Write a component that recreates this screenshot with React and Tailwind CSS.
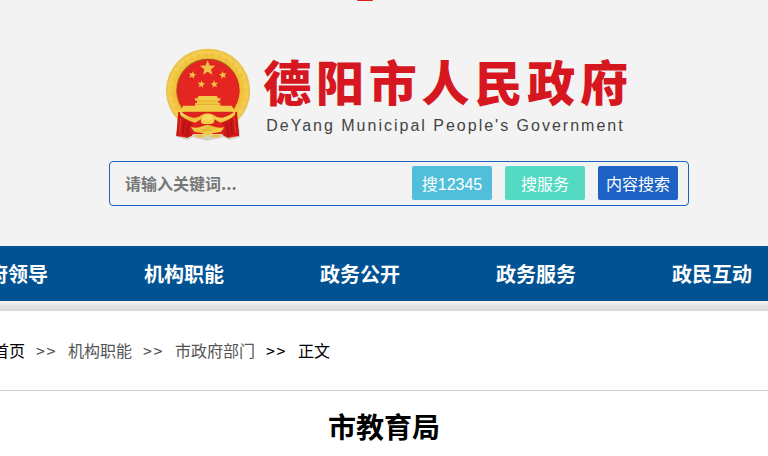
const navItems = ['政府领导', '机构职能', '政务公开', '政务服务', '政民互动'];

const STAR = '0,-1 0.26,-0.358 0.951,-0.309 0.42,0.136 0.588,0.809 0,0.44 -0.588,0.809 -0.42,0.136 -0.951,-0.309 -0.26,-0.358';

function Emblem() {
  return (
    <svg viewBox="28 22 264 279" className="h-[93px] w-[88px] shrink-0" role="img" aria-label="国徽">
      <defs>
        <linearGradient id="gold" x1="0" y1="0" x2="1" y2="1">
          <stop offset="0" stopColor="#fbe07a" />
          <stop offset="0.4" stopColor="#edbd36" />
          <stop offset="0.7" stopColor="#f6d04a" />
          <stop offset="1" stopColor="#dba52a" />
        </linearGradient>
        <radialGradient id="rim" cx="0.5" cy="0.5" r="0.5">
          <stop offset="0.72" stopColor="#d9a52a" />
          <stop offset="0.78" stopColor="#f0c03a" />
          <stop offset="0.92" stopColor="#f5d052" />
          <stop offset="1" stopColor="#e9bd3e" />
        </radialGradient>
      </defs>
      <path d="M66 218L62 288L96 298L110 290L155 300L204 290L222 298L254 288L246 214Z" fill="#d3d3c4" />
      <circle cx="159" cy="152" r="125" fill="#dcdcca" />
      <circle cx="157" cy="150" r="126" fill="url(#rim)" />
      <circle cx="157" cy="150" r="110" fill="none" stroke="#e1ac2b" strokeWidth="12" strokeDasharray="9 13" opacity="0.2" />
      <circle cx="157" cy="149" r="95" fill="#a9521b" />
      <circle cx="158" cy="151" r="93" fill="#e42521" />
      <g fill="#efc145">
        <polygon points={STAR} transform="translate(156 83) scale(24)" />
        <polygon points={STAR} transform="translate(110 103) rotate(12) scale(12)" />
        <polygon points={STAR} transform="translate(202 103) rotate(-12) scale(12)" />
        <polygon points={STAR} transform="translate(137 131) rotate(8) scale(12)" />
        <polygon points={STAR} transform="translate(176 131) rotate(-8) scale(12)" />
      </g>
      <path d="M128 166H184L186 173H195L193 180H188V187H194V195H228L239 213H74L82 195H118V187H124V180H119L117 173H126Z" fill="#f3ca45" />
      <path d="M122 181H190M118 191H194" stroke="#d99a2c" strokeWidth="2" />
      <path d="M70 214H242L250 286L218 291L198 280H114L94 291L62 286Z" fill="#dd211d" />
      <path d="M68 213Q97 226 112 250L101 261L109 285L94 291L79 283L62 286Z" fill="#c91616" />
      <path d="M244 213Q215 226 200 250L210 261L203 285L218 291L233 283L250 286Z" fill="#c91616" />
      <path d="M86 240L82 280M226 240L230 280M98 248L94 286M213 248L218 286" stroke="#a31211" strokeWidth="3" fill="none" />
      <path d="M76 230L72 278M236 230L240 278" stroke="#e83328" strokeWidth="4" />
      <path d="M72 209Q88 226 112 231Q126 233 139 222Q155 213 173 222Q186 233 200 231Q224 226 240 209L238 223Q224 238 194 246L176 236Q178 250 164 250H146Q133 250 136 236L118 246Q88 238 74 223Z" fill="url(#gold)" />
      <path d="M139 242Q140 224 148 221H165Q173 225 174 242L165 237L156 243L147 237Z" fill="#f9d863" />
      <path d="M106 260Q127 264 142 256L156 252L170 256Q186 264 206 260L195 274L172 277L156 288L140 277L117 274Z" fill="url(#gold)" />
      <path d="M142 271Q156 262 170 271" stroke="#d49a30" strokeWidth="2" fill="none" />
      <path d="M118 283L138 281L150 290H122ZM194 283L174 281L162 290H190Z" fill="#f0c03f" />
    </svg>
  );
}

const crumb = 'text-[#555] hover:text-[#005293]';
const searchButton = "h-[34px] w-20 rounded-xs pt-1 font-['Liberation_Sans','Noto_Sans_CJK_SC',sans-serif] text-white";

export default function App() {
  return (
    <div className="min-h-screen overflow-x-hidden bg-white font-['Noto_Sans','Noto_Sans_CJK_SC',sans-serif] text-base text-black">
      <header className="relative flex flex-col items-center bg-[#f3f3f3] pt-12 pb-10 pl-[30px]">
        <span className="absolute top-0 left-[357px] h-px w-4 rounded-b-full bg-[#dc1f20]" />
        <div className="flex h-[93px] gap-[10px]">
          <Emblem />
          <div className="pt-1">
            <h1 className="font-['Noto_Sans_CJK_SC',sans-serif] text-5xl leading-[56px] font-black tracking-widest whitespace-nowrap text-[#d7171f]">
              德阳市人民政府
            </h1>
            <p className="mt-1 pl-[3px] font-['Liberation_Sans',sans-serif] text-base leading-7 tracking-[2px] whitespace-nowrap text-[#444]">
              DeYang Municipal People's Government
            </p>
          </div>
        </div>
        <form className="mt-5 flex h-[45px] w-full max-w-[580px] items-center gap-[13px] rounded border border-[#1d62c1] pr-[10px] pb-0.5 pl-[15px]" onSubmit={(e) => e.preventDefault()}>
          <input
            type="text"
            aria-label="关键词"
            placeholder="请输入关键词..."
            className="h-9 min-w-0 flex-1 bg-transparent font-['Noto_Sans_CJK_SC',sans-serif] text-base font-bold outline-none placeholder:text-[#777]"
          />
          <button type="submit" className={`${searchButton} bg-[#52bfda]`}>搜12345</button>
          <button type="submit" className={`${searchButton} bg-[#54dac2]`}>搜服务</button>
          <button type="submit" className={`${searchButton} bg-[#1d62c4]`}>内容搜索</button>
        </form>
      </header>

      <nav className="overflow-hidden bg-[#005293]">
        <ul className="-ml-20 flex">
          {navItems.map((item) => (
            <li key={item} className="w-44 shrink-0">
              <a href="#" className="block text-center font-['Noto_Sans_CJK_SC',sans-serif] text-xl leading-[55px] font-bold text-white">{item}</a>
            </li>
          ))}
        </ul>
      </nav>
      <div className="h-[10px] bg-linear-to-b from-[#f3f3f3] to-[#d6d6d6]" />

      <main>
        <nav aria-label="面包屑" className="overflow-hidden border-b border-[#ccc]">
          <ol className="-ml-[7px] flex h-[79px] items-center pb-0.5 font-['Noto_Sans_CJK_SC',sans-serif] whitespace-nowrap">
            <li><a href="#">首页</a></li>
            <li aria-hidden="true" className="w-[43px] text-center tracking-widest text-[#555]">&gt;&gt;</li>
            <li><a href="#" className={crumb}>机构职能</a></li>
            <li aria-hidden="true" className="w-[43px] text-center tracking-widest text-[#555]">&gt;&gt;</li>
            <li><a href="#" className={crumb}>市政府部门</a></li>
            <li aria-hidden="true" className="w-[43px] text-center tracking-widest">&gt;&gt;</li>
            <li aria-current="page">正文</li>
          </ol>
        </nav>
        <h2 className="pt-3.5 text-center font-['Noto_Sans_CJK_SC',sans-serif] text-[28px] leading-[42px] font-bold">市教育局</h2>
      </main>
    </div>
  );
}
